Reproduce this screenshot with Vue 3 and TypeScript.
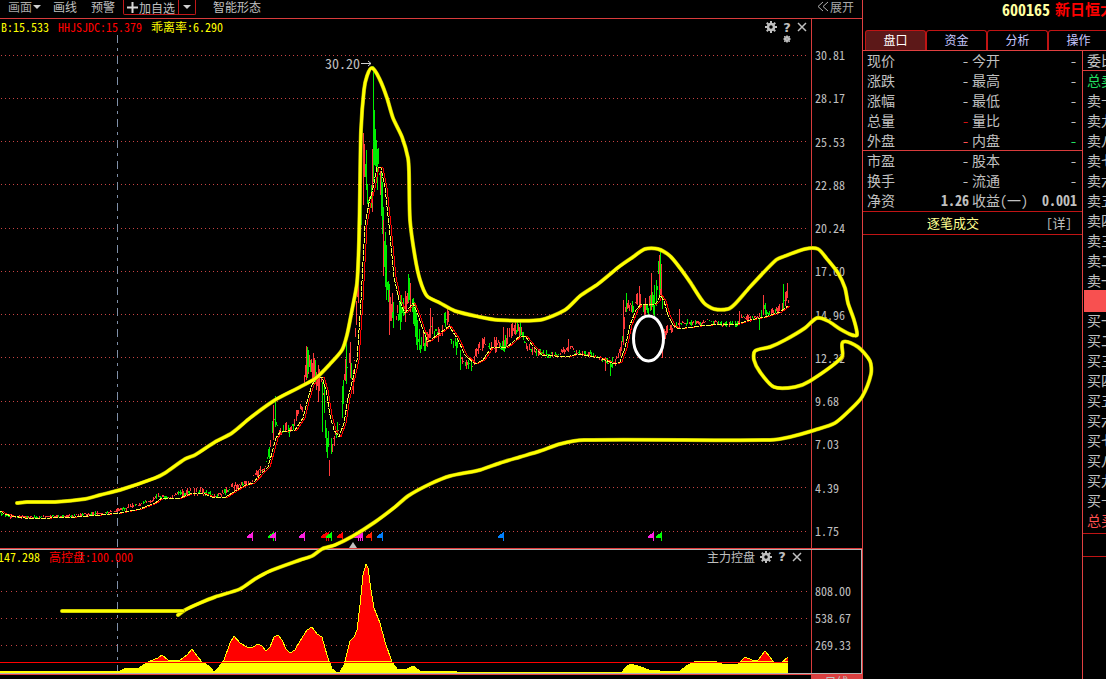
<script setup lang="ts">
type Point = [number, number]
type Candle = { x: number; top: number; height: number; color: string }

const RED = '#ff3b3b'
const GREEN = '#00ee00'

const priceTicks = ['30.81', '28.17', '25.53', '22.88', '20.24', '17.60', '14.96', '12.32', '9.68', '7.03', '4.39', '1.75']
const priceLines = [55, 98, 141, 184, 228, 271, 314, 357, 401, 444, 487, 531]
const volumeTicks = ['808.00', '538.67', '269.33']
const volumeLines = [591, 618, 645]

const tabs = ['盘口', '资金', '分析', '操作']

const quotes = [
  { a: '现价', av: '-', b: '今开', bv: '-' },
  { a: '涨跌', av: '-', b: '最高', bv: '-' },
  { a: '涨幅', av: '-', b: '最低', bv: '-' },
  { a: '总量', av: '-', ac: 'deep', b: '量比', bv: '-' },
  { a: '外盘', av: '-', ac: 'up', b: '内盘', bv: '-', bc: 'down' },
  { a: '市盈', av: '-', b: '股本', bv: '-' },
  { a: '换手', av: '-', b: '流通', bv: '-' },
  { a: '净资', av: '1.26', ac: 'strong', b: '收益(一)', bv: '0.001', bc: 'strong' },
]

const digits = ['一', '二', '三', '四', '五', '六', '七', '八', '九', '十']
const asks = [...digits].reverse().map((d) => '卖' + d)
const bids = digits.map((d) => '买' + d)

// x, high, low of the price range along the time axis
const range: [number, number, number][] = [
  [0, 510, 516], [10, 514, 519], [20, 515, 519], [50, 515, 518], [75, 513, 518], [110, 510, 514],
  [125, 505, 511], [140, 501, 506], [150, 498, 504], [158, 492, 500], [166, 496, 501], [180, 489, 497],
  [190, 487, 498], [202, 487, 496], [215, 494, 498], [225, 488, 497], [234, 480, 491], [242, 481, 488],
  [251, 481, 486], [254, 463, 483], [260, 466, 473], [264, 466, 473], [269, 440, 460], [272, 410, 440],
  [275, 398, 430], [278, 424, 442], [282, 427, 436], [286, 418, 432], [289, 426, 438], [293, 419, 430],
  [297, 402, 418], [302, 404, 414], [305, 350, 390], [307, 346, 380], [310, 355, 380], [314, 352, 382],
  [318, 365, 402], [321, 365, 390], [324, 385, 430], [327, 420, 458], [330, 440, 462], [334, 425, 450],
  [338, 420, 440], [342, 380, 425], [345, 345, 390], [349, 340, 380], [353, 350, 395], [356, 300, 350],
  [359, 200, 280], [361, 135, 220], [364, 138, 200], [368, 175, 225], [371, 160, 220], [373, 70, 190],
  [376, 120, 190], [379, 150, 190], [382, 180, 245], [384, 225, 280], [387, 255, 310], [390, 290, 330],
  [393, 300, 332], [398, 290, 330], [404, 295, 330], [408, 272, 305], [412, 282, 322], [415, 305, 345],
  [420, 332, 360], [425, 330, 355], [430, 312, 338], [434, 318, 340], [439, 322, 345], [444, 310, 330],
  [448, 310, 325], [450, 334, 345], [455, 332, 352], [459, 345, 368], [465, 355, 370], [472, 358, 372],
  [478, 340, 358], [485, 333, 352], [490, 336, 356], [498, 336, 352], [503, 340, 354], [509, 322, 345],
  [515, 322, 336], [520, 322, 336], [526, 340, 352], [535, 347, 357], [548, 350, 359], [558, 352, 357],
  [570, 340, 352], [576, 349, 357], [590, 350, 357], [602, 357, 362], [611, 358, 370], [616, 352, 365],
  [622, 335, 352], [625, 295, 325], [628, 296, 313], [634, 300, 313], [638, 287, 310], [643, 295, 315],
  [648, 300, 318], [652, 280, 310], [655, 285, 325], [658, 256, 300], [661, 250, 300], [663, 325, 345],
  [668, 325, 335], [680, 319, 327], [700, 320, 326], [708, 317, 323], [720, 321, 327], [738, 320, 328],
  [742, 312, 321], [752, 315, 322], [760, 312, 320], [764, 300, 316], [768, 309, 317], [776, 306, 314],
  [782, 298, 314], [785, 290, 310], [788, 288, 308],
]

const spikes: [number, number, number, string][] = [
  [273, 405, 440, RED], [275, 396, 427, GREEN], [306, 346, 380, RED], [308, 350, 372, GREEN],
  [313, 353, 382, RED], [318, 365, 402, RED], [322, 382, 432, GREEN], [326, 436, 452, GREEN],
  [329, 460, 476, RED], [327, 438, 458, GREEN], [346, 342, 368, GREEN], [350, 342, 378, RED],
  [353, 370, 394, RED], [361, 140, 225, GREEN], [363, 133, 205, RED], [366, 150, 190, GREEN],
  [372, 149, 212, RED], [373, 66, 182, GREEN], [374, 110, 165, GREEN], [376, 140, 170, GREEN],
  [381, 173, 216, GREEN], [383, 220, 276, RED], [385, 232, 270, GREEN], [386, 245, 300, GREEN],
  [389, 290, 335, RED], [392, 293, 312, RED], [408, 274, 302, GREEN], [409, 278, 300, GREEN],
  [430, 308, 333, RED], [447, 308, 325, RED], [460, 350, 370, GREEN], [503, 327, 346, RED],
  [515, 321, 334, RED], [520, 322, 336, GREEN], [568, 339, 352, RED], [605, 358, 371, RED],
  [610, 360, 376, GREEN], [623, 300, 345, RED], [626, 293, 312, GREEN], [639, 286, 308, RED],
  [651, 273, 310, RED], [654, 285, 320, GREEN], [659, 255, 290, RED], [660, 251, 289, GREEN],
  [662, 330, 358, RED], [679, 309, 328, RED], [739, 311, 321, RED], [759, 318, 330, GREEN],
  [763, 295, 315, RED], [783, 284, 310, GREEN], [785, 292, 306, RED], [787, 283, 298, RED],
]

function noise(n: number): number {
  const s = Math.sin(n * 12.9898 + 4.137) * 43758.5453
  return s - Math.floor(s)
}

function buildCandles(): Candle[] {
  const out: Candle[] = []
  let k = 0
  for (let x = 0; x <= 788; x += 1) {
    while (k < range.length - 2 && range[k + 1][0] < x) k++
    const [x0, h0, l0] = range[k]
    const [x1, h1, l1] = range[k + 1]
    const t = Math.min(1, (x - x0) / (x1 - x0))
    const hi = h0 + (h1 - h0) * t
    const lo = l0 + (l1 - l0) * t
    const span = lo - hi
    const top = Math.round(hi + span * 0.6 * noise(x))
    const bottom = Math.round(lo - span * 0.6 * noise(x + 997))
    const trend = h1 + l1 < h0 + l0 ? 0.28 : 0.62
    const color = noise(Math.floor(x / 2) + 311) < trend ? GREEN : RED
    if (noise(x + 53) > 0.15) out.push({ x, top: Math.min(top, bottom), height: Math.max(1, Math.abs(bottom - top)), color })
  }
  for (const [x, y0, y1, color] of spikes) out.push({ x, top: y0, height: y1 - y0, color })
  return out
}
const candles = buildCandles()

const average: Point[] = [
  [0, 511], [5, 514], [12, 516], [25, 518], [50, 518], [75, 517], [100, 515], [120, 513], [140, 509], [155, 503],
  [162, 498], [180, 498], [193, 493], [205, 494], [212, 497], [226, 497], [240, 488], [246, 485], [253, 483],
  [262, 473], [268, 467], [272, 453], [276, 438], [280, 432], [295, 430], [303, 418], [308, 398], [312, 385],
  [317, 377], [322, 377], [326, 390], [330, 415], [334, 430], [339, 437], [344, 423], [348, 398], [353, 378],
  [357, 360], [361, 300], [365, 225], [369, 203], [373, 188], [377, 167], [381, 168], [385, 188], [389, 225],
  [394, 277], [399, 300], [405, 313], [409, 308], [413, 303], [418, 315], [423, 330], [428, 342], [436, 336],
  [449, 326], [457, 338], [465, 355], [475, 364], [483, 360], [491, 348], [507, 347], [520, 336], [525, 336],
  [533, 346], [542, 355], [567, 357], [577, 354], [600, 358], [615, 364], [620, 362], [625, 348], [630, 325],
  [636, 310], [641, 304], [655, 304], [658, 301], [660, 295], [664, 301], [668, 315], [673, 325], [678, 329],
  [700, 326], [722, 324], [735, 325], [750, 320], [765, 317], [780, 312], [788, 306],
]

const control: Point[] = [
  [0, 671], [100, 671], [120, 671], [124, 669], [130, 668], [138, 669], [142, 666], [150, 661], [158, 658],
  [162, 655], [168, 660], [180, 660], [187, 655], [192, 649], [197, 656], [202, 662], [209, 666], [214, 672],
  [219, 667], [224, 660], [230, 643], [234, 636], [240, 643], [247, 647], [253, 647], [258, 644], [262, 646],
  [266, 651], [270, 647], [274, 637], [278, 635], [282, 640], [286, 649], [290, 653], [295, 650], [300, 641],
  [307, 630], [312, 627], [317, 634], [322, 637], [327, 655], [332, 669], [336, 672], [340, 672], [344, 665],
  [350, 641], [354, 637], [357, 630], [360, 605], [363, 575], [366, 564], [368, 568], [371, 590], [374, 608],
  [380, 623], [385, 642], [392, 662], [397, 669], [405, 670], [413, 666], [420, 671], [437, 672], [447, 671],
  [457, 672], [622, 672], [626, 667], [631, 664], [641, 667], [649, 670], [660, 671], [672, 672], [680, 671],
  [688, 665], [694, 662], [713, 661], [720, 663], [723, 665], [738, 664], [745, 657], [752, 660], [758, 660],
  [765, 651], [770, 657], [774, 663], [782, 662], [788, 657],
]

const sketch: Point[] = [
  [17, 503], [27, 502], [55, 502], [85, 499], [100, 495], [120, 490], [155, 478], [165, 473], [185, 459],
  [195, 455], [215, 442], [232, 433], [250, 418], [275, 400], [300, 387], [316, 378], [330, 364], [342, 350],
  [347, 335], [352, 310], [357, 283], [359, 240], [360, 185], [361, 130], [364, 90], [367, 76], [372, 68],
  [380, 80], [387, 98], [393, 118], [402, 137], [408, 158], [409, 172], [410, 220], [415, 257], [420, 280],
  [427, 296], [440, 303], [455, 311], [480, 317], [498, 320], [540, 320], [565, 310], [580, 296], [598, 284],
  [620, 266], [633, 257], [645, 249], [658, 249], [670, 256], [680, 268], [690, 282], [704, 303], [714, 309],
  [728, 309], [735, 304], [750, 287], [776, 260], [785, 256], [805, 249], [818, 249], [827, 259], [838, 273],
  [845, 288], [848, 303], [854, 320], [857, 335], [852, 335], [840, 329], [828, 321], [817, 318], [805, 328],
  [785, 340], [770, 347], [755, 351], [754, 360], [760, 372], [774, 387], [795, 387], [810, 381], [842, 357],
  [843, 342], [858, 347], [870, 361], [871, 374], [862, 397], [850, 410], [835, 423], [815, 430], [790, 437],
  [770, 440], [584, 440], [560, 444], [540, 451], [520, 457], [500, 463], [480, 470], [450, 476], [430, 484],
  [408, 496], [395, 507], [375, 522], [353, 536], [335, 545], [322, 549], [312, 556], [300, 560], [270, 571],
  [255, 579], [240, 589], [215, 597], [200, 603], [185, 610], [178, 615],
]

const flags: [number, string][] = [
  [252, '#ff20e0'], [273, '#00ff00'], [275, '#ff20e0'], [304, '#ff20e0'], [326, '#ff0000'], [328, '#ff0000'],
  [331, '#00ff00'], [342, '#ff0000'], [358, '#ff20e0'], [360, '#ff20e0'], [362, '#ff20e0'], [371, '#ff2000'],
  [382, '#0080ff'], [503, '#0080ff'], [653, '#ff20e0'], [661, '#00ff00'],
]

const toPoints = (list: Point[], dx = 0): string => list.map(([x, y]) => `${x + dx},${y}`).join(' ')
const averageFast = toPoints(average)
const averageSlow = toPoints(average, 2)
const controlTop = toPoints(control)
const controlArea = `0,673 ${controlTop} 788,673`

// Rounds the corners of a hand-drawn stroke while passing through every point
function smooth(p: Point[]): string {
  let d = `M${p[0][0]} ${p[0][1]}`
  for (let i = 0; i < p.length - 1; i++) {
    const a = p[Math.max(0, i - 1)]
    const b = p[i]
    const c = p[i + 1]
    const e = p[Math.min(p.length - 1, i + 2)]
    const len = Math.hypot(c[0] - b[0], c[1] - b[1])
    const ta = Math.min(1, len / Math.max(1, Math.hypot(c[0] - a[0], c[1] - a[1]))) / 4
    const tb = Math.min(1, len / Math.max(1, Math.hypot(e[0] - b[0], e[1] - b[1]))) / 4
    d += `C${b[0] + (c[0] - a[0]) * ta} ${b[1] + (c[1] - a[1]) * ta} ${c[0] - (e[0] - b[0]) * tb} ${c[1] - (e[1] - b[1]) * tb} ${c[0]} ${c[1]}`
  }
  return d
}
const sketchPath = smooth(sketch)
const gearTeeth = [0, 45, 90, 135, 180, 225, 270, 315]
</script>

<template>
  <div class="terminal">
    <main class="main">
      <nav class="toolbar">
        <button class="faded">画面<svg class="caret" width="8" height="4"><path d="M0 0H8L4 4Z" /></svg></button>
        <button class="lines">画线</button>
        <button class="alert">预警</button>
        <span class="watch">
          <button class="add"><svg width="11" height="11"><path d="M5.500 0V11M0 5.500H11" /></svg>加自选</button>
          <button class="more" aria-label="更多"><svg class="caret" width="8" height="4"><path d="M0 0H8L4 4Z" /></svg></button>
        </span>
        <button class="pattern">智能形态</button>
        <button class="expand"><svg width="12" height="11"><path d="M6 1L1 5.500L6 10M11 1L6 5.500L11 10" /></svg>展开</button>
      </nav>

      <section class="pane price">
        <svg class="plot" viewBox="0 19 811 529" preserveAspectRatio="none" aria-label="价格走势">
          <g class="grid"><path v-for="y in priceLines" :key="y" :d="`M1 ${y + 0.5}H808`" /></g>
          <path class="cursor" d="M117.500 35V548" />
          <g shape-rendering="crispEdges">
            <rect v-for="(c, i) in candles" :key="i" :x="c.x" :y="c.top" width="1" :height="c.height" :fill="c.color" />
          </g>
          <polyline class="slow" :points="averageSlow" />
          <polyline class="fast-under" :points="averageFast" />
          <polyline class="fast" :points="averageFast" />
          <text class="peak" x="325" y="69">30.20</text>
          <path class="arrow" d="M361 63.500H371M368 61L371 63.500L368 66" />
          <g v-for="[x, color] in flags" :key="x" :fill="color" shape-rendering="crispEdges">
            <path :d="`M${x + 1} 532V541H${x}V538H${x - 5}V536Z`" />
          </g>
          <path class="marker" d="M349 548L353 542L357 548Z" />
        </svg>
        <header class="legend">
          <span class="yellow">B:15.533</span>
          <span class="red">HHJSJDC:15.379</span>
          <span class="yellow">乖离率:6.290</span>
          <span class="tools">
            <button aria-label="设置">
              <svg width="12" height="12" viewBox="-6 -6 12 12"><circle r="3" stroke="#c0c0c0" stroke-width="2.500" /><rect v-for="a in gearTeeth" :key="a" x="-1" y="-6" width="2" height="3" fill="#c0c0c0" :transform="`rotate(${a})`" /></svg>
            </button>
            <button class="help" aria-label="帮助">?</button>
            <button aria-label="关闭"><svg width="10" height="10"><path d="M1 1L9 9M9 1L1 9" stroke="#c0c0c0" stroke-width="1.500" /></svg></button>
          </span>
          <svg class="sun" width="10" height="10" viewBox="-5 -5 10 10"><circle r="3" fill="#d8d8d8" /><path d="M0-4V4M-4 0H4M-3-3L3 3M3-3L-3 3" stroke="#aaa" /></svg>
        </header>
        <div class="axis price-axis"><span v-for="t in priceTicks" :key="t">{{ t }}</span></div>
      </section>

      <section class="pane control">
        <div class="control-frame">
          <svg class="plot" viewBox="0 550 811 123" preserveAspectRatio="none" aria-label="主力控盘">
            <defs>
              <clipPath id="above"><rect x="0" y="550" width="811" height="111" /></clipPath>
              <clipPath id="below"><rect x="0" y="661" width="811" height="12" /></clipPath>
            </defs>
            <g class="grid sparse"><path v-for="y in volumeLines" :key="y" :d="`M1 ${y + 0.5}H808`" /></g>
            <path class="cursor" d="M117.500 560V673" />
            <path class="cursor" d="M81.500 552V563" />
            <polygon :points="controlArea" fill="#ff0000" clip-path="url(#above)" />
            <polygon :points="controlArea" fill="#ffff00" clip-path="url(#below)" />
            <polyline class="outline" :points="controlTop" />
            <path class="base" d="M0 662.500H788" />
          </svg>
          <header class="legend">
            <span class="yellow cut">147.298</span>
            <span class="red">高控盘:100.000</span>
            <span class="tools">
              <button class="name">主力控盘</button>
              <button aria-label="指标设置">
                <svg width="12" height="12" viewBox="-6 -6 12 12"><circle r="3" stroke="#c0c0c0" stroke-width="2.500" /><rect v-for="a in gearTeeth" :key="a" x="-1" y="-6" width="2" height="3" fill="#c0c0c0" :transform="`rotate(${a})`" /></svg>
              </button>
              <button class="help" aria-label="指标帮助">?</button>
              <button aria-label="关闭指标"><svg width="10" height="10"><path d="M1 1L9 9M9 1L1 9" stroke="#c0c0c0" stroke-width="1.500" /></svg></button>
            </span>
          </header>
          <div class="axis control-axis"><span v-for="t in volumeTicks" :key="t">{{ t }}</span></div>
        </div>
      </section>

      <footer class="periods"><button>日线</button></footer>

      <svg class="annotation" viewBox="0 0 862 679" preserveAspectRatio="none" aria-hidden="true">
        <path class="halo" :d="sketchPath" />
        <path class="ink" :d="sketchPath" />
        <path class="halo" d="M62 611H183" />
        <path class="ink" d="M62 611H183" />
        <ellipse cx="648.500" cy="338.500" rx="15" ry="22.500" />
      </svg>
    </main>

    <aside class="side">
      <h1><span class="code">600165</span><span class="stock">新日恒大</span></h1>
      <nav class="tabs">
        <button v-for="(t, i) in tabs" :key="t" :class="{ active: i === 0 }">{{ t }}</button>
      </nav>
      <div class="columns">
        <section class="quote">
          <table>
            <tbody>
              <tr v-for="(q, i) in quotes" :key="q.a" :class="{ ruled: i === 4 }">
                <th scope="row">{{ q.a }}</th>
                <td :class="q.ac">{{ q.av }}</td>
                <th scope="row" class="second">{{ q.b }}</th>
                <td :class="q.bc">{{ q.bv }}</td>
              </tr>
            </tbody>
          </table>
          <div class="ticks"><h2>逐笔成交</h2><button>[详]</button></div>
        </section>
        <section class="book">
          <div class="row ruled">委比</div>
          <div class="row down">总卖</div>
          <div v-for="a in asks" :key="a" class="row">{{ a }}</div>
          <div class="last"></div>
          <div v-for="b in bids" :key="b" class="row">{{ b }}</div>
          <div class="row up">总买</div>
          <div class="foot"></div>
        </section>
      </div>
    </aside>
  </div>
</template>

<style>
html,
body {
  background: #000;
}
</style>

<style scoped>
.terminal {
  display: flex;
  height: 100vh;
  overflow: hidden;
  background: #000;
  color: #c0c0c0;
  font: 12px/14px 'Noto Sans CJK SC', 'Liberation Sans', sans-serif;
  font-feature-settings: 'hwid';
}
button {
  margin: 0;
  padding: 0;
  border: 0;
  background: none;
  color: inherit;
  font: inherit;
  font-feature-settings: inherit;
  white-space: nowrap;
}
svg {
  fill: none;
}
.main {
  position: relative;
  z-index: 1;
  flex: 1;
  min-width: 0;
  display: grid;
  grid-template-rows: 19px 529fr 127fr 4px;
  border-right: 1px solid #e04040;
}
.toolbar {
  display: flex;
  align-items: flex-start;
  padding: 0 8px;
  border-bottom: 1px solid #d83c3c;
}
.toolbar button {
  line-height: 13px;
}
.caret path {
  fill: #d0d0d0;
}
.faded {
  display: flex;
  align-items: center;
  gap: 1px;
  color: #a8a8a8;
}
.lines {
  margin-left: 12px;
}
.alert {
  margin-left: 14px;
}
.watch {
  display: flex;
  height: 14px;
  margin-left: 8px;
  border: solid #c01818;
  border-width: 0 1px 1px;
  border-radius: 0 0 2px 2px;
}
.add {
  display: flex;
  align-items: center;
  gap: 1px;
  padding: 0 3px;
}
.add path {
  stroke: #d8d8d8;
  stroke-width: 2;
}
.more {
  display: flex;
  align-items: center;
  padding: 0 4px;
  border-left: 1px solid #c01818;
}
.pattern {
  margin-left: 17px;
}
.expand {
  display: flex;
  align-items: center;
  gap: 1px;
  margin-left: auto;
  color: #a8a8a8;
}
.expand path {
  stroke: #b0b0b0;
}
.pane {
  min-height: 0;
}
.price,
.control-frame {
  display: grid;
  grid-template-rows: minmax(0, 1fr);
}
.price {
  grid-template-columns: minmax(0, 1fr) 51px;
}
.control {
  display: grid;
  border: solid #e03c3c;
  border-width: 1px 0;
}
.control-frame {
  grid-template-columns: minmax(0, 1fr) 50px;
  border: solid #b4b4b4;
  border-width: 1px 1px 1px 0;
}
.plot {
  grid-area: 1 / 1;
  display: block;
  width: 100%;
  height: 100%;
}
.grid {
  stroke: #c84444;
  stroke-dasharray: 1 3;
  shape-rendering: crispEdges;
}
.sparse {
  stroke-dasharray: 1 4;
}
.cursor {
  stroke: #8090a8;
  stroke-dasharray: 8 5 3 5;
  shape-rendering: crispEdges;
}
.slow,
.fast-under,
.fast {
  shape-rendering: crispEdges;
}
.slow {
  stroke: #ff0000;
}
.fast-under {
  stroke: #000;
}
.fast {
  stroke: #ffff40;
  stroke-dasharray: 5 1;
}
.peak {
  fill: #c0c0c0;
  font-size: 14px;
}
.arrow {
  stroke: #d0d0d0;
}
.marker {
  fill: #c0c0c0;
}
.outline {
  stroke: #ffff00;
  shape-rendering: crispEdges;
}
.base {
  stroke: #ff0000;
  shape-rendering: crispEdges;
}
.legend {
  grid-area: 1 / 1;
  align-self: start;
  display: grid;
  grid-template-columns: auto auto auto 1fr;
  column-gap: 9px;
  white-space: nowrap;
}
.price .legend {
  padding: 1px 4px 0 1px;
}
.control .legend {
  grid-template-columns: auto auto 1fr;
  padding: 0 9px 0 0;
}
.control .legend span {
  line-height: 13px;
}
.yellow {
  color: #ffff00;
}
.red {
  color: #ff0000;
}
.cut {
  margin-left: -2px;
}
.tools {
  display: flex;
  justify-content: flex-end;
  align-items: center;
  gap: 5px;
}
.tools button {
  display: flex;
  align-items: center;
}
.tools .help {
  width: 10px;
  justify-content: center;
  font: bold 13px/13px 'DejaVu Sans', sans-serif;
}
.sun {
  grid-column: 1 / -1;
  justify-self: end;
  margin-right: 15px;
}
.axis {
  grid-area: 1 / 2;
  display: flex;
  flex-direction: column;
  padding-left: 3px;
  border-left: 1px solid #d83c3c;
}
.price-axis {
  justify-content: space-between;
  padding-top: 29px;
  padding-bottom: 10px;
}
.control-axis {
  gap: 13px;
  padding-top: 34px;
}
.periods {
  display: flex;
  justify-content: flex-end;
  overflow: hidden;
}
.periods button {
  width: 51px;
  height: 14px;
  background: #d84040;
}
.annotation {
  position: absolute;
  inset: 0;
  width: 100%;
  height: 100%;
  overflow: visible;
  pointer-events: none;
  stroke-linecap: round;
  stroke-linejoin: round;
}
.halo {
  stroke: #a0a000;
  stroke-width: 4;
}
.ink {
  stroke: #ffff00;
  stroke-width: 3;
}
.annotation ellipse {
  fill: #000;
  stroke: #fff;
  stroke-width: 3;
}
.side {
  flex: 0 0 243px;
  min-width: 0;
  display: flex;
  flex-direction: column;
  overflow: hidden;
}
h1 {
  display: flex;
  gap: 5px;
  margin: 0;
  padding: 0 0 12px 139px;
  font-size: 16px;
  line-height: 18px;
  font-weight: bold;
  white-space: nowrap;
}
.code {
  color: #ffffa0;
}
.stock {
  color: #ff0000;
  font-size: 15px;
}
.tabs {
  display: flex;
  height: 21px;
  box-sizing: border-box;
  padding-left: 2px;
  border-bottom: 1px solid #e04040;
}
.tabs button {
  flex: 0 0 61px;
  box-sizing: border-box;
  padding-bottom: 2px;
  border: solid #c01414;
  border-width: 1px 1px 0 1px;
  border-radius: 3px 3px 0 0;
  color: #c8c8ff;
}
.tabs .active {
  background: #5c1818;
  color: #fff;
}
.columns {
  flex: 1;
  display: flex;
  min-height: 0;
  font-size: 14px;
  line-height: 18px;
}
.quote {
  flex: 0 0 219px;
}
table {
  width: 100%;
  table-layout: fixed;
  border-collapse: separate;
  border-spacing: 0;
}
th,
td {
  box-sizing: border-box;
  height: 20px;
  padding: 0;
  font-weight: normal;
  line-height: 18px;
  vertical-align: top;
  white-space: nowrap;
}
.ruled th,
.ruled td {
  border-bottom: 1px solid #d83c3c;
}
th {
  width: 48px;
  padding-left: 4px;
  text-align: left;
}
th:nth-child(1) + td {
  width: 58px;
}
th.second {
  width: 64px;
  padding-left: 3px;
}
td {
  text-align: right;
}
td:last-child {
  padding-right: 5px;
}
.strong {
  font-weight: bold;
}
.deep {
  color: #d01010;
}
.up {
  color: #ff5050;
}
.down {
  color: #20e060;
}
.ticks {
  display: flex;
  justify-content: space-between;
  align-items: center;
  height: 22px;
  padding: 0 10px 0 64px;
  border: solid #c01414;
  border-width: 1px 0;
  font-size: 13px;
}
h2 {
  margin: 0;
  color: #ffff90;
  font-size: 13px;
  font-weight: normal;
}
.book {
  flex: 1;
  min-width: 0;
  overflow: hidden;
  border-left: 1px solid #e04040;
}
.row {
  box-sizing: border-box;
  height: 20px;
  padding-left: 4px;
  white-space: nowrap;
}
.row.ruled {
  border-bottom: 1px solid #d83c3c;
}
.last {
  height: 22px;
  margin: -1px 0 -1px 1px;
  background: #f85050;
}
.foot {
  height: 22px;
  margin-top: 2px;
  border: solid #c01414;
  border-width: 1px 0;
}
</style>
